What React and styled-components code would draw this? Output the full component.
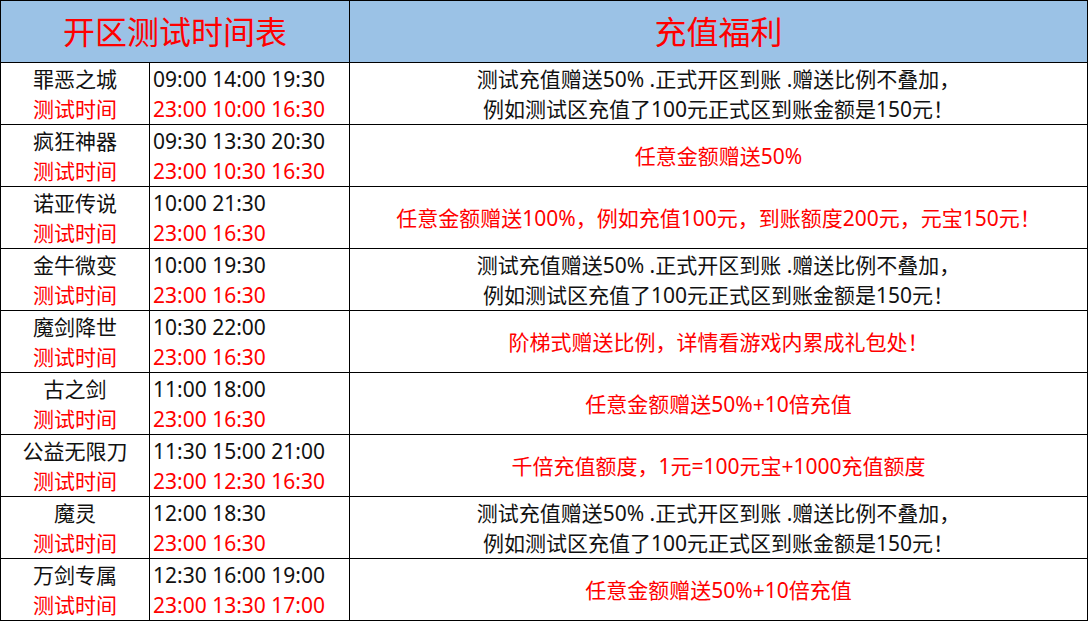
import React from 'react';
import styled, { createGlobalStyle } from 'styled-components';

const GlobalStyle = createGlobalStyle`
  html, body {
    margin: 0;
    padding: 0;
    background: #ffffff;
  }
  body {
    font-family: "Noto Sans", "Noto Sans CJK SC", sans-serif;
  }
`;

const servers = [
  {
    name: '罪恶之城',
    times: '09:00 14:00 19:30',
    test: '23:00 10:00 16:30',
    bonus: ['测试充值赠送50% .正式开区到账 .赠送比例不叠加，', '例如测试区充值了100元正式区到账金额是150元！'],
    red: false
  },
  { name: '疯狂神器', times: '09:30 13:30 20:30', test: '23:00 10:30 16:30', bonus: ['任意金额赠送50%'], red: true },
  {
    name: '诺亚传说',
    times: '10:00 21:30',
    test: '23:00 16:30',
    bonus: ['任意金额赠送100%，例如充值100元，到账额度200元，元宝150元！'],
    red: true
  },
  {
    name: '金牛微变',
    times: '10:00 19:30',
    test: '23:00 16:30',
    bonus: ['测试充值赠送50% .正式开区到账 .赠送比例不叠加，', '例如测试区充值了100元正式区到账金额是150元！'],
    red: false
  },
  { name: '魔剑降世', times: '10:30 22:00', test: '23:00 16:30', bonus: ['阶梯式赠送比例，详情看游戏内累成礼包处！'], red: true },
  { name: '古之剑', times: '11:00 18:00', test: '23:00 16:30', bonus: ['任意金额赠送50%+10倍充值'], red: true },
  {
    name: '公益无限刀',
    times: '11:30 15:00 21:00',
    test: '23:00 12:30 16:30',
    bonus: ['千倍充值额度，1元=100元宝+1000充值额度'],
    red: true
  },
  {
    name: '魔灵',
    times: '12:00 18:30',
    test: '23:00 16:30',
    bonus: ['测试充值赠送50% .正式开区到账 .赠送比例不叠加，', '例如测试区充值了100元正式区到账金额是150元！'],
    red: false
  },
  { name: '万剑专属', times: '12:30 16:00 19:00', test: '23:00 13:30 17:00', bonus: ['任意金额赠送50%+10倍充值'], red: true }
];

const App = () => {
  return (
    <>
      <GlobalStyle />
      <Sheet>
        <colgroup>
          <col style={{ width: 149 }} />
          <col style={{ width: 200 }} />
          <col />
        </colgroup>
        <thead>
          <tr>
            <HeadCell colSpan={2}>开区测试时间表</HeadCell>
            <HeadCell>充值福利</HeadCell>
          </tr>
        </thead>
        <tbody>
          {servers.map((s) => (
            <Row key={s.name}>
              <NameCell>
                <Line>{s.name}</Line>
                <Line $red>测试时间</Line>
              </NameCell>
              <TimeCell>
                <Line>{s.times}</Line>
                <Line $red>{s.test}</Line>
              </TimeCell>
              <BonusCell>
                {s.bonus.map((b) => (
                  <Line key={b} $red={s.red}>
                    {b}
                  </Line>
                ))}
              </BonusCell>
            </Row>
          ))}
        </tbody>
      </Sheet>
    </>
  );
};

export default App;

const Sheet = styled.table`
  width: 1088px;
  border-collapse: collapse;
  table-layout: fixed;
  border: 1px solid #000;
`;

const HeadCell = styled.th`
  height: 61px;
  padding: 0;
  background-color: #9bc2e6;
  border: 1px solid #000;
  color: #ff0000;
  font-size: 32px;
  font-weight: 400;
  text-align: center;
  vertical-align: middle;
  line-height: 40px;
`;

const Row = styled.tr`
  height: 62px;
`;

const Cell = styled.td`
  border: 1px solid #000;
  padding: 0;
  vertical-align: middle;
  font-size: 21px;
  color: #111;
  white-space: nowrap;
`;

const NameCell = styled(Cell)`
  text-align: center;
`;

const TimeCell = styled(Cell)`
  text-align: left;
  padding-left: 3px;
`;

const BonusCell = styled(Cell)`
  text-align: center;
`;

const Line = styled.div`
  line-height: 30px;
  color: ${(p) => (p.$red ? '#ff0000' : '#111')};
`;
